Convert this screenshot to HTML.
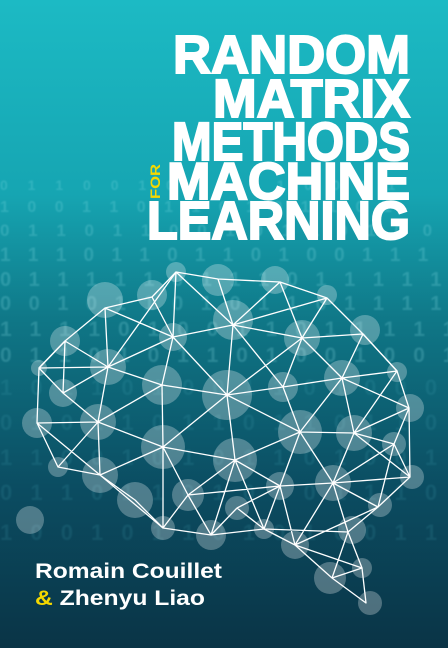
<!DOCTYPE html>
<html><head><meta charset="utf-8"><style>
html,body{margin:0;padding:0;width:448px;height:648px;overflow:hidden;background:#0b3f50}
svg{display:block}
</style></head><body>
<svg width="448" height="648" viewBox="0 0 448 648" xmlns="http://www.w3.org/2000/svg">
<defs>
<linearGradient id="bg" x1="0" y1="0" x2="0" y2="1">
<stop offset="0" stop-color="#1cbac4"/>
<stop offset="0.3" stop-color="#16a5b2"/>
<stop offset="0.5" stop-color="#0f7686"/>
<stop offset="0.75" stop-color="#0b4d62"/>
<stop offset="1" stop-color="#0a3446"/>
</linearGradient>
<filter id="bl"><feGaussianBlur stdDeviation="0.8"/></filter>
</defs>
<rect width="448" height="648" fill="url(#bg)"/>
<g font-family="Liberation Sans, sans-serif" font-weight="bold" fill="#8fe3ea" opacity="0.22" filter="url(#bl)">
<text x="0" y="190" font-size="14" letter-spacing="8">0 1 1 0 0 1 0 1 1 0 1 0 0 1 1</text>
<text x="0" y="212" font-size="16" letter-spacing="7">1 0 0 1 1 0 1 1 0 1 0 1 1 0 1</text>
<text x="0" y="236" font-size="17" letter-spacing="7">0 1 1 0 1 1 0 0 1 0 1 1 0 1 0 0</text>
<text x="0" y="261" font-size="19" letter-spacing="6">1 1 1 0 1 1 0 1 1 0 1 0 0 1 1 1</text>
<text x="0" y="286" font-size="20" letter-spacing="6">0 1 1 1 1 1 0 1 1 1 0 1 1 1 1 1</text>
<text x="0" y="310" font-size="20" letter-spacing="6">0 0 1 0 1 1 0 1 0 1 1 0 1 1 1 1</text>
<text x="0" y="336" font-size="21" letter-spacing="6">1 1 1 1 0 1 0 0 1 1 0 1 1 1 1 1</text>
<text x="0" y="362" font-size="21" letter-spacing="6">0 1 1 0 1 0 1 1 0 1 0 0 1 0 0 1</text>
</g>
<g font-family="Liberation Sans, sans-serif" font-weight="bold" fill="#4fb0c0" opacity="0.14" filter="url(#bl)">
<text x="0" y="395" font-size="22" letter-spacing="6">1 0 1 1 0 1 0 0 1 1 0 1 0 0 0</text>
<text x="0" y="430" font-size="22" letter-spacing="6">0 1 0 1 1 0 1 1 0 1 1 0 1 1 0</text>
<text x="0" y="465" font-size="22" letter-spacing="6">1 1 0 0 1 0 1 0 1 1 0 1 0 0 1</text>
<text x="0" y="500" font-size="22" letter-spacing="6">0 1 1 0 1 1 0 1 0 1 0 1 1 1 0</text>
<text x="0" y="540" font-size="22" letter-spacing="6">1 0 0 1 0 1 1 0 1 0 1 0 0 1 1</text>
</g>
<g fill="#ffffff" fill-opacity="0.28">
<circle cx="176" cy="272" r="10"/><circle cx="218" cy="280" r="16"/><circle cx="275" cy="280" r="14"/>
<circle cx="327" cy="295" r="10"/><circle cx="365" cy="330" r="15"/><circle cx="397" cy="372" r="10"/>
<circle cx="410" cy="408" r="14"/><circle cx="412" cy="477" r="12"/><circle cx="380" cy="505" r="12"/>
<circle cx="352" cy="530" r="14"/><circle cx="362" cy="568" r="10"/><circle cx="370" cy="603" r="12"/>
<circle cx="330" cy="578" r="16"/><circle cx="295" cy="545" r="14"/><circle cx="264" cy="529" r="10"/>
<circle cx="211" cy="535" r="15"/><circle cx="163" cy="528" r="12"/><circle cx="100" cy="475" r="18"/>
<circle cx="58" cy="467" r="10"/><circle cx="37" cy="423" r="15"/><circle cx="39" cy="368" r="8"/>
<circle cx="65" cy="341" r="15"/><circle cx="105" cy="300" r="18"/><circle cx="152" cy="295" r="15"/>
<circle cx="233" cy="320" r="20"/><circle cx="173" cy="337" r="14"/><circle cx="302" cy="338" r="18"/>
<circle cx="108" cy="367" r="18"/><circle cx="162" cy="385" r="20"/><circle cx="227" cy="395" r="25"/>
<circle cx="283" cy="387" r="15"/><circle cx="342" cy="378" r="18"/><circle cx="63" cy="393" r="14"/>
<circle cx="98" cy="422" r="18"/><circle cx="163" cy="447" r="22"/><circle cx="235" cy="460" r="22"/>
<circle cx="300" cy="432" r="22"/><circle cx="354" cy="433" r="18"/><circle cx="394" cy="444" r="12"/>
<circle cx="188" cy="495" r="16"/><circle cx="280" cy="486" r="14"/><circle cx="333" cy="483" r="18"/>
<circle cx="135" cy="500" r="18"/><circle cx="237" cy="508" r="12"/><circle cx="30" cy="520" r="14"/>
</g>
<g stroke="#ffffff" stroke-width="1.3" fill="none" stroke-linejoin="round">
<polygon points="176,272 218,279 280,282 327,298 363,334 397,371 409,408 410,477 378,507 348,532 362,568 366,603 332,578 295,545 264,529 211,535 163,528 100,475 58,467 37,423 39,368 65,341 105,308 152,297"/>
<path d="M176,272L233,325L280,282M218,279L233,325L327,298M176,272L173,337L152,297M105,308L173,337L233,325
M176,272L108,367M105,308L108,367L65,341M39,368L108,367M39,368L63,393L65,341M63,393L108,367L162,385L173,337
M233,325L302,338L280,282M302,338L327,298M302,338L363,334L342,378L302,338M363,334L397,371L342,378M342,378L409,408
M233,325L227,395L173,337M162,385L227,395L283,387L302,338M227,395L302,338M283,387L342,378M283,387L300,432L342,378
M342,378L354,433L397,371M354,433L409,408M354,433L394,444L409,408M394,444L410,477M354,433L410,477
M63,393L98,422L37,423M98,422L108,367M98,422L162,385M98,422L163,447L162,385M98,422L100,475M98,422L58,467M37,423L98,422
M162,385L163,447L227,395M227,395L235,460L163,447M227,395L300,432L235,460M227,395L283,387M300,432L354,433L333,483L300,432
M300,432L280,486L235,460M280,486L333,483M333,483L394,444M333,483L378,507L394,444M333,483L410,477
M163,447L188,495L235,460M100,475L163,447M163,447L163,528M188,495L163,528M188,495L211,535L235,460M188,495L280,486
M235,460L264,529L280,486M237,508L211,535M237,508L264,529M237,508L280,486M280,486L295,545M280,486L264,529
M333,483L348,532M333,483L295,545M264,529L348,532M295,545L378,507M295,545L362,568M332,578L348,532M332,578L362,568
M100,475L135,500L163,528M37,423L100,475M65,341L39,368M152,297L173,337M233,325L283,387M108,367L173,337M173,337L227,395M162,385L98,422"/>
</g>
<g fill="#ffffff" font-family="Liberation Sans, sans-serif" font-weight="bold" stroke="#ffffff" stroke-width="2">
<text x="173" y="73" font-size="54" textLength="237" lengthAdjust="spacingAndGlyphs">RANDOM</text>
<text x="213" y="117" font-size="54" textLength="197" lengthAdjust="spacingAndGlyphs">MATRIX</text>
<text x="172" y="160" font-size="54" textLength="238" lengthAdjust="spacingAndGlyphs">METHODS</text>
<text x="167" y="199" font-size="52" textLength="243" lengthAdjust="spacingAndGlyphs">MACHINE</text>
<text x="147" y="239" font-size="54" textLength="263" lengthAdjust="spacingAndGlyphs">LEARNING</text>
</g>
<text transform="translate(160,199) rotate(-90)" font-family="Liberation Sans, sans-serif" font-weight="bold" font-size="14" fill="#f5d800" textLength="35" lengthAdjust="spacingAndGlyphs">FOR</text>
<g font-family="Liberation Sans, sans-serif" font-weight="bold" font-size="21" fill="#ffffff">
<text x="35" y="578" textLength="187" lengthAdjust="spacingAndGlyphs">Romain Couillet</text>
<text x="35" y="605" textLength="170" lengthAdjust="spacingAndGlyphs"><tspan fill="#f5d800">&amp;</tspan> Zhenyu Liao</text>
</g>
</svg>
</body></html>
